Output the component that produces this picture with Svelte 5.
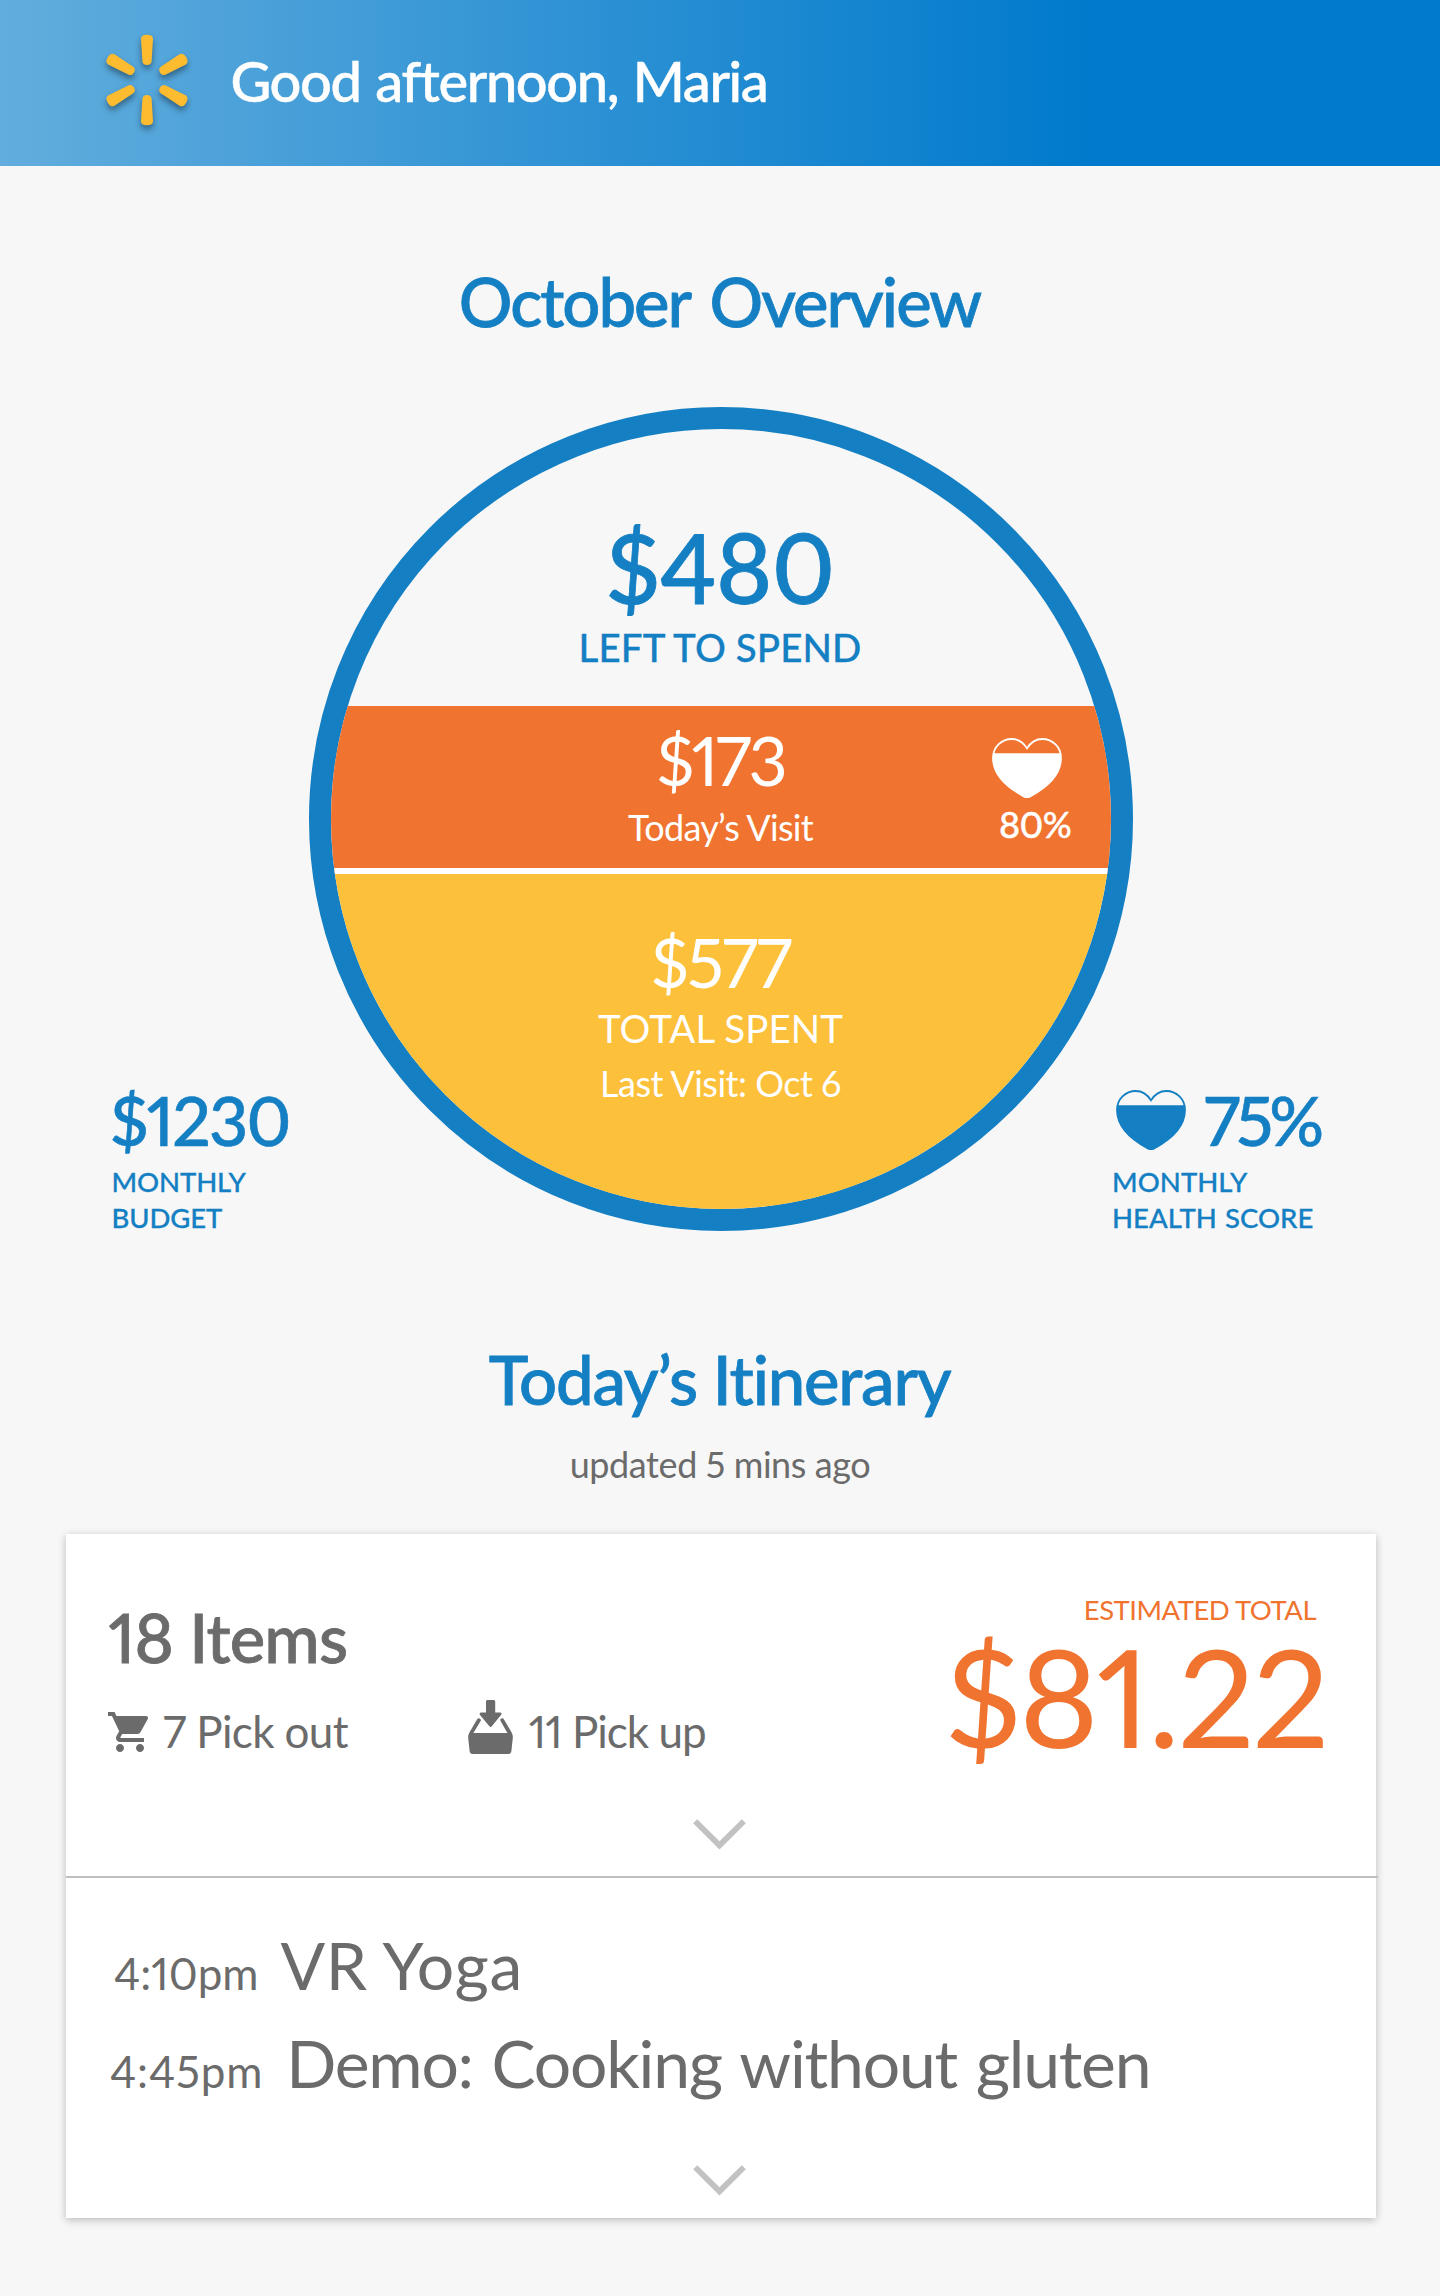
<script>
  const rays = [0, 60, 120, 180, 240, 300];
  const heart =
    'M35 10.4C31.4 4.6 26.4 1 19.8 1C9.4 1 1 9 1 20C1 37.5 14.6 49 31.4 58.2Q35 60.2 38.6 58.2C55.4 49 69 37.5 69 20C69 9 60.6 1 50.2 1C43.6 1 38.6 4.6 35 10.4Z';
  const events = [
    { time: '4:10pm', title: 'VR Yoga', kind: 'yoga' },
    { time: '4:45pm', title: 'Demo: Cooking without gluten', kind: 'demo' }
  ];
</script>

{#snippet heartIcon(id)}
  <svg class="heart" width="70" height="60" viewBox="0 0 70 60">
    <clipPath {id}><rect x="0" y="15.3" width="70" height="45" /></clipPath>
    <path d={heart} fill="none" stroke="currentColor" stroke-width="1.8" />
    <path d={heart} fill="currentColor" clip-path="url(#{id})" />
  </svg>
{/snippet}

{#snippet chevron()}
  <svg class="chevron" width="53" height="31" viewBox="0 0 53 31">
    <path d="M2.2 2.2L26.5 26.3L50.8 2.2" fill="none" stroke="#c2c2c2" stroke-width="5.8" />
  </svg>
{/snippet}

<div class="page">
  <header>
    <svg class="spark" width="90" height="100" viewBox="-45 -50 90 100">
      {#each rays as angle}
        <path
          transform="rotate({angle})"
          d="M-6 -41Q-6 -45.3 0 -45.3Q6 -45.3 6 -41L4.6 -18.5Q4 -15 0 -15Q-4 -15 -4.6 -18.5Z"
          fill="#fdbb30"
        />
      {/each}
    </svg>
    <span class="greeting">Good afternoon, Maria</span>
  </header>

  <h1 class="october">October Overview</h1>

  <section class="overview">
    <div class="stat budget">
      <div class="figure">$1230</div>
      <div class="caption">MONTHLY<br />BUDGET</div>
    </div>

    <div class="circle">
      <div class="left">
        <div class="amount">$480</div>
        <div class="label">LEFT TO SPEND</div>
      </div>
      <div class="visit">
        <div class="visit-main">
          <div class="value v173">$173</div>
          <div class="note today">Today’s Visit</div>
        </div>
        <div class="visit-health">
          {@render heartIcon('fill-visit')}
          <div class="percent">80%</div>
        </div>
      </div>
      <div class="spent">
        <div class="value v577">$577</div>
        <div class="label thin">TOTAL SPENT</div>
        <div class="note last">Last Visit: Oct 6</div>
      </div>
    </div>

    <div class="stat health">
      <div class="score">
        {@render heartIcon('fill-month')}
        <div class="figure">75%</div>
      </div>
      <div class="caption">MONTHLY<br />HEALTH SCORE</div>
    </div>
  </section>

  <h1 class="itinerary">Today’s Itinerary</h1>
  <p class="updated">updated 5 mins ago</p>

  <section class="card">
    <div class="order">
      <div class="summary">
        <div>
          <h2>18 Items</h2>
          <div class="modes">
            <div class="mode">
              <svg class="cart" width="48" height="48" viewBox="0 0 24 24">
                <path
                  fill="#6b6b6b"
                  d="M7 18c-1.1 0-1.99.9-1.99 2S5.9 22 7 22s2-.9 2-2-.9-2-2-2zM1 2v2h2l3.6 7.59-1.35 2.45c-.16.28-.25.61-.25.96 0 1.1.9 2 2 2h12v-2H7.42c-.14 0-.25-.11-.25-.25l.03-.12.9-1.63h7.45c.75 0 1.41-.41 1.75-1.03l3.58-6.49A1 1 0 0 0 20 4H5.21l-.94-2H1zm16 16c-1.1 0-1.99.9-1.99 2s.89 2 1.99 2 2-.9 2-2-.9-2-2-2z"
                />
              </svg>
              <span class="out">7 Pick out</span>
            </div>
            <div class="mode">
              <svg class="basket" width="45" height="54" viewBox="0 0 45 54">
                <g fill="#6b6b6b">
                  <path d="M19.4 0H25.6Q27.2 0 27.2 1.6V12.6H32Q34.4 12.8 33 15L23.8 26.3Q22.6 27.6 21.4 26.3L12 15Q10.8 12.8 13.2 12.6H18V1.6Q18 0 19.4 0Z" />
                  <path d="M9 19.5Q10 17.8 11.6 18.4Q13.4 19.4 12.6 21L5.4 33H39.4L32.6 21Q31.6 19.2 33.4 18.4Q35 17.8 36 19.5L43.6 32.5Q45 35 44.8 38L43.4 51Q43 54 40.4 54H4.6Q2 54 1.6 51L.2 38Q0 35 1.4 32.5Z" />
                </g>
              </svg>
              <span class="up">11 Pick up</span>
            </div>
          </div>
        </div>
        <div class="total">
          <div class="total-label">ESTIMATED TOTAL</div>
          <div class="total-value">$81.22</div>
        </div>
      </div>
      {@render chevron()}
    </div>

    <div class="events">
      {#each events as event}
        <div class="event {event.kind}">
          <span class="time">{event.time}</span>
          <span class="title">{event.title}</span>
        </div>
      {/each}
      {@render chevron()}
    </div>
  </section>
</div>

<style>
  :global(body) {
    margin: 0;
    background: #f7f7f7;
  }
  .page {
    width: 1440px;
    height: 2296px;
    overflow: hidden;
    background: #f7f7f7;
    color: #6b6b6b;
    font-family: Lato, 'Liberation Sans', sans-serif;
    font-variant-numeric: proportional-nums;
    white-space: nowrap;
  }
  svg {
    display: block;
    flex: none;
  }
  header {
    display: flex;
    height: 166px;
    padding-left: 102px;
    box-sizing: border-box;
    background: linear-gradient(90deg, #62addd 0%, #007acc 76%);
    color: #fff;
  }
  .spark {
    margin-top: 30px;
    overflow: visible;
    filter: drop-shadow(0 4px 3px rgba(0, 0, 0, 0.4));
  }
  .greeting {
    margin: 46px 0 0 38.5px;
    font-size: 56px;
    line-height: 70px;
    font-weight: 500;
    letter-spacing: -1.4px;
    word-spacing: 2px;
    -webkit-text-stroke: 0.5px currentColor;
  }
  h1 {
    margin: 0;
    text-align: center;
    color: #147fc3;
    font-size: 67px;
    line-height: 80px;
    font-weight: 500;
    -webkit-text-stroke: 0.8px currentColor;
  }
  .october {
    margin-top: 95px;
    padding-right: 1px;
    letter-spacing: -2px;
    word-spacing: 6px;
  }
  .overview {
    display: grid;
    grid-template-columns: 309px 824px 307px;
    height: 824px;
    margin-top: 66px;
    color: #147fc3;
  }
  .stat {
    margin-top: 678px;
  }
  .budget {
    padding-left: 110px;
  }
  .health {
    margin-left: -20px;
  }
  .figure {
    font-size: 68px;
    line-height: 70px;
    font-weight: 500;
    letter-spacing: -1.8px;
    -webkit-text-stroke: 0.6px currentColor;
  }
  .caption {
    margin-top: 9px;
    font-size: 27.5px;
    line-height: 36px;
    font-weight: 500;
    letter-spacing: -0.1px;
    -webkit-text-stroke: 0.3px currentColor;
  }
  .budget .caption {
    padding-left: 1.5px;
  }
  .health .caption {
    margin-left: -1px;
    word-spacing: 1px;
    letter-spacing: 0.05px;
  }
  .score {
    display: flex;
    margin-left: 3px;
    gap: 18px;
  }
  .score .figure {
    letter-spacing: -4px;
  }
  .score .heart {
    margin-top: 5px;
  }
  .circle {
    width: 824px;
    height: 824px;
    box-sizing: border-box;
    border: 22px solid #147fc3;
    border-radius: 50%;
    overflow: hidden;
    text-align: center;
  }
  .left {
    height: 277px;
    padding: 90px 2px 0 0;
    box-sizing: border-box;
  }
  .amount {
    font-size: 96px;
    line-height: 96px;
    font-weight: 500;
    letter-spacing: -0.8px;
    -webkit-text-stroke: 0.8px currentColor;
  }
  .label {
    margin-top: 12px;
    font-size: 38.5px;
    line-height: 40px;
    font-weight: 500;
    letter-spacing: 0.1px;
    -webkit-text-stroke: 0.3px currentColor;
  }
  .visit {
    display: grid;
    grid-template-columns: 580px 200px;
    height: 168px;
    box-sizing: border-box;
    border-bottom: 6px solid #fff;
    background: #f07430;
    color: #fff;
  }
  .visit-main {
    padding: 19px 0 0 199px;
  }
  .value {
    font-size: 68px;
    line-height: 70px;
  }
  .v173 {
    letter-spacing: -3px;
  }
  .v577 {
    letter-spacing: -1.9px;
  }
  .note {
    margin-top: 12px;
    font-size: 36px;
    line-height: 40px;
    letter-spacing: -0.7px;
  }
  .visit-health {
    padding: 32px 0 0 81px;
    text-align: left;
  }
  .percent {
    margin: 6px 0 0 7px;
    font-size: 36px;
    line-height: 40px;
    font-weight: 500;
    letter-spacing: -0.6px;
    -webkit-text-stroke: 0.4px currentColor;
  }
  .spent {
    height: 351px;
    padding: 53px 1px 0 0;
    box-sizing: border-box;
    background: #fcc03a;
    color: #fff;
  }
  .label.thin {
    margin-top: 11px;
    font-weight: 400;
    -webkit-text-stroke: 0;
  }
  .note.last {
    margin-top: 15px;
    letter-spacing: -0.5px;
  }
  .itinerary {
    margin-top: 108px;
    padding-right: 1px;
    letter-spacing: -1.2px;
  }
  .updated {
    margin: 25px 0 0;
    text-align: center;
    font-size: 36px;
    line-height: 40px;
    letter-spacing: -0.4px;
  }
  .card {
    width: 1310px;
    height: 684px;
    margin: 50px 0 0 66px;
    background: #fff;
    box-shadow: 0 2px 8px rgba(0, 0, 0, 0.25);
  }
  .order {
    width: 1312px;
    height: 344px;
    box-sizing: border-box;
    border-bottom: 2px solid #bfbfbf;
  }
  .summary {
    display: flex;
    justify-content: space-between;
    height: 285px;
    padding: 61px 50px 0 40px;
    box-sizing: border-box;
  }
  h2 {
    margin: 7px 0 0 2.5px;
    font-size: 67px;
    line-height: 70px;
    font-weight: 500;
    letter-spacing: -0.8px;
    -webkit-text-stroke: 0.8px currentColor;
  }
  .modes {
    display: flex;
    gap: 120px;
    margin-top: 34px;
    font-size: 44px;
    line-height: 50px;
  }
  .mode {
    display: flex;
  }
  .cart {
    margin: 2px 9px 0 0;
  }
  .out {
    letter-spacing: -0.65px;
  }
  .up {
    letter-spacing: -1px;
  }
  .basket {
    margin: -6px 16px 0 0;
  }
  .total {
    display: flex;
    flex-direction: column;
    align-items: flex-end;
    color: #f07430;
  }
  .total-label {
    margin-right: 12px;
    font-size: 27.5px;
    line-height: 30px;
    letter-spacing: -0.5px;
  }
  .total-value {
    margin: 5px 1px 0 0;
    font-size: 136px;
    line-height: 132px;
    letter-spacing: -2.4px;
  }
  .chevron {
    margin-left: 627px;
  }
  .events {
    padding-top: 38px;
  }
  .event {
    display: flex;
    align-items: baseline;
    height: 98px;
    line-height: 98px;
  }
  .yoga {
    padding-left: 48px;
    gap: 22px;
  }
  .demo {
    padding-left: 44px;
    gap: 23px;
  }
  .time {
    font-size: 44px;
  }
  .title {
    font-size: 66px;
  }
  .yoga .title {
    letter-spacing: 0.5px;
  }
  .demo .time {
    letter-spacing: 0.8px;
  }
  .demo .title {
    letter-spacing: -1.2px;
    word-spacing: 3px;
  }
  .events .chevron {
    margin-top: 53px;
  }
</style>
